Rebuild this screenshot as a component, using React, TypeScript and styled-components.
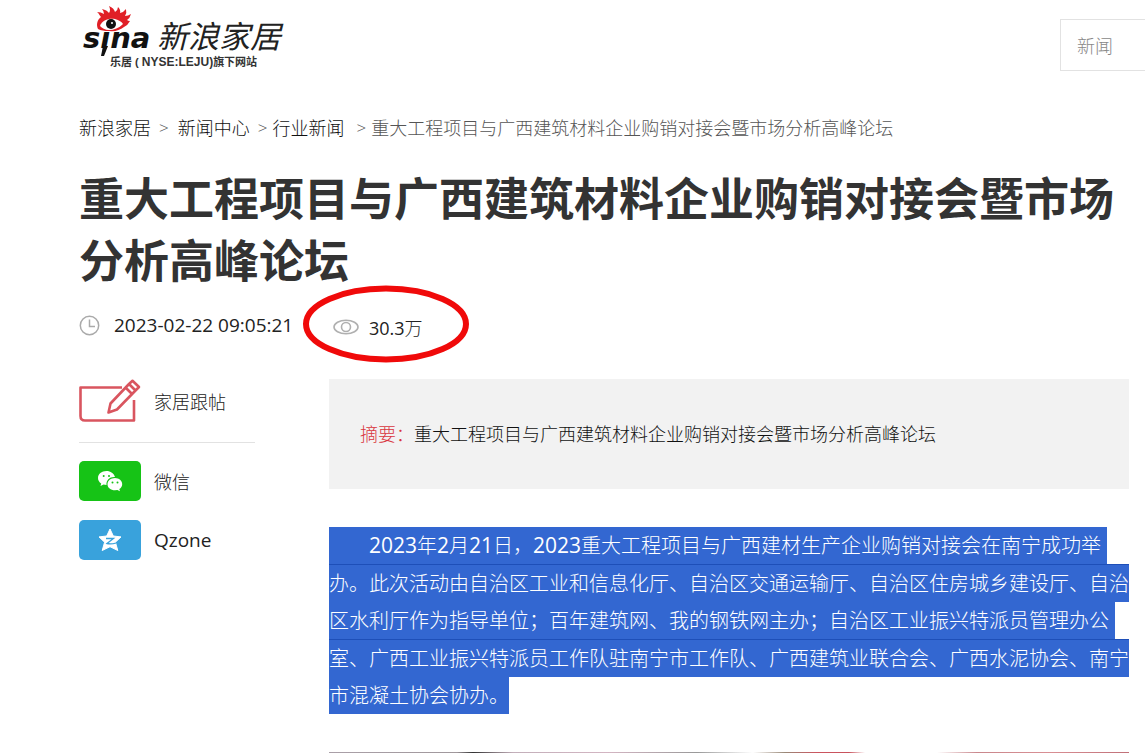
import React from 'react';
import styled, { createGlobalStyle, css } from 'styled-components';

const GlobalStyle = createGlobalStyle`
  * { box-sizing: border-box; }
  body {
    margin: 0;
    background: #fff;
    color: #222;
    font-family: "Open Sans", "Noto Sans CJK SC", sans-serif;
    font-size: 18px;
  }
  a { color: inherit; text-decoration: none; }
`;

const Page = styled.div`
  overflow: hidden;
`;

const Header = styled.header`
  display: flex;
  justify-content: space-between;
  align-items: flex-start;
  height: 110px;
  padding-left: 79px;
`;

const Logo = styled.a`
  display: block;
  padding-top: 4px;
`;

const Search = styled.input`
  width: 85px;
  height: 52px;
  margin-top: 19px;
  padding: 0 16px;
  border: 1px solid #e2e2e2;
  border-right: 0;
  border-radius: 0;
  outline: 0;
  background: #fff;
  font: 300 18px "Noto Sans CJK SC", sans-serif;
  &::placeholder { color: #888; opacity: 1; }
`;

const Content = styled.main`
  padding: 0 16px 0 79px;
`;

const Crumbs = styled.nav`
  display: flex;
  height: 36px;
  line-height: 36px;
  font-weight: 300;
  white-space: nowrap;
  color: #555;
  a { color: #111; }
`;

const Arrow = styled.span<{ $gap: 'after' | 'even' | 'before' }>`
  padding-left: ${(p) => (p.$gap === 'before' ? 12 : 8)}px;
  padding-right: ${(p) => (p.$gap === 'after' ? 9 : 5)}px;
  font-size: 17px;
`;

const Title = styled.h1`
  margin: 22px 0 0;
  font-size: 45px;
  line-height: 62px;
  font-weight: 700;
  color: #333;
`;

const Meta = styled.div`
  display: flex;
  align-items: center;
  height: 66px;
`;

const Time = styled.time`
  width: 189px;
  margin-left: 14px;
  font-size: 19px;
`;

const Views = styled.div`
  position: relative;
  display: flex;
  align-items: center;
  gap: 10px;
  margin-left: 30px;
  padding-top: 4px;
`;

const Ring = styled.svg`
  position: absolute;
  left: -31px;
  top: -25px;
`;

const Light = styled.span`
  font-weight: 300;
`;

const Columns = styled.div`
  display: flex;
  align-items: flex-start;
  gap: 74px;
  padding-top: 21px;
`;

const Share = styled.aside`
  flex: 0 0 176px;
`;

const ShareLink = styled.a<{ $lined?: boolean }>`
  display: flex;
  align-items: center;
  gap: 13px;
  height: 40px;
  margin-bottom: 19px;
  ${(p) => p.$lined && css`
    height: 64px;
    margin-bottom: 18px;
    padding-bottom: 20px;
    border-bottom: 1px solid #e2e2e2;
  `}
`;

const Latin = styled.span`
  font-size: 19px;
`;

const Tile = styled.span<{ $color: string }>`
  display: flex;
  align-items: center;
  justify-content: center;
  width: 62px;
  height: 40px;
  border-radius: 5px;
  background: ${(p) => p.$color};
`;

const Article = styled.article`
  flex: 1;
  min-width: 0;
`;

const Summary = styled.p`
  margin: 0 0 38px;
  padding: 37px 31px;
  line-height: 36px;
  font-weight: 300;
  color: #111;
  background: #f2f2f2;
  b { font-weight: 300; color: #d9363e; }
`;

const Body = styled.p`
  margin: 0;
  font-size: 20px;
  line-height: 37px;
  font-weight: 300;
  color: #fff;
`;

const Line = styled.span<{ $seam?: boolean; $tail?: boolean; $indent?: boolean }>`
  display: block;
  width: fit-content;
  height: ${(p) => (p.$seam ? 38 : 37)}px;
  padding-left: ${(p) => (p.$indent ? 40 : 0)}px;
  padding-right: ${(p) => (p.$tail ? 6 : 0)}px;
  border-top: ${(p) => (p.$seam ? '1px solid #1e4fb8' : '0')};
  background: #3367d1;
  white-space: nowrap;
`;

const Num = styled.span`
  font-size: 21px;
  font-weight: 400;
`;

const Photo = styled.div`
  height: 1px;
  margin-top: 38px;
  background: linear-gradient(90deg, #aaa0a8 0%, #a0989c 16%, #333 18%, #c3afba 23%, #d3b5c2 35%, #999 46%, #fff 53%, #998877 57%, #cc5560 61%, #c8525c 65%, #fff 67%, #fff 76%, #c9878c 81%, #d98f94 90%, #c07078 100%);
`;

export default function App() {
  return (
    <Page>
      <GlobalStyle />
      <Header>
        <Logo href="#" aria-label="新浪家居">
          <svg width="212" height="68" viewBox="79 4 212 68">
            <text x="83" y="48" fontFamily="DejaVu Sans" fontSize="29" fontWeight="700" fontStyle="italic" fill="#111">sina</text>
            <path d="M103 46L108 46L104 56L101 56Z" fill="#111" />
            <path d="M98 29C96 25 97 20 101 17C99 15 99 13 97 12Q101 12 104 14Q104 11 102 9Q107 10 109 13Q111 10 109 6Q114 8 115 12Q118 10 118 7Q121 10 120 13Q124 12 126 9Q127 13 125 16Q128 16 131 14Q130 18 127 20Q128 21 130 21Q128 25 124 27Q118 32 109 31Q102 31 98 29Z" fill="#e01f26" />
            <path d="M100 26C102 20 109 18 115 19C119 20 122 22 123 24C119 28 114 30 109 30C105 30 102 28 100 26Z" fill="#fff" />
            <circle cx="111" cy="24" r="5" fill="#111" />
            <circle cx="112" cy="23" r="1" fill="#fff" />
            <text x="157" y="48" fontFamily="Noto Sans CJK SC" fontSize="31" fontStyle="italic" fill="#222">新浪家居</text>
            <text x="110" y="66" fontFamily="Liberation Sans, Noto Sans CJK SC" fontSize="11" fontWeight="700" fill="#333">乐居 ( <tspan fontSize="12">NYSE:LEJU)</tspan>旗下网站</text>
          </svg>
        </Logo>
        <Search aria-label="新闻" placeholder="新闻" />
      </Header>
      <Content>
        <Crumbs>
          <a href="#">新浪家居</a><Arrow $gap="after">&gt;</Arrow>
          <a href="#">新闻中心</a><Arrow $gap="even">&gt;</Arrow>
          <a href="#">行业新闻</a><Arrow $gap="before">&gt;</Arrow>
          <span>重大工程项目与广西建筑材料企业购销对接会暨市场分析高峰论坛</span>
        </Crumbs>
        <Title>重大工程项目与广西建筑材料企业购销对接会暨市场分析高峰论坛</Title>
        <Meta>
          <svg width="21" height="21" viewBox="0 0 21 21" fill="none" stroke="#aaa" strokeWidth="1.5">
            <circle cx="10.5" cy="10.5" r="9.2" />
            <path d="M10.5 4.500V11.500H16" />
          </svg>
          <Time>2023-02-22 09:05:21</Time>
          <Views>
            <svg width="26" height="16" viewBox="0 0 26 16" fill="none" stroke="#b0b0b0" strokeWidth="1.6">
              <ellipse cx="13" cy="8" rx="12" ry="6.8" />
              <circle cx="13" cy="8" r="4.5" />
            </svg>
            <span>30.3<Light>万</Light></span>
            <Ring width="168" height="78" viewBox="0 0 168 78">
              <ellipse cx="84" cy="39" rx="80" ry="35.5" fill="none" stroke="#f00a0a" strokeWidth="6" />
            </Ring>
          </Views>
        </Meta>
        <Columns>
          <Share>
            <ShareLink href="#" $lined>
              <svg width="62" height="44" viewBox="0 0 62 44" fill="none" stroke="#d9555f" strokeWidth="2.6" strokeLinejoin="round">
                <path d="M43 8.500H1.500V37Q1.500 41.500 6 41.500H55V21" />
                <path d="M29.500 33.500L31.500 24.500L50 5L56.500 11.500L38 30.500ZM50 5L53.500 1.800L60 8L56.500 11.500M46.500 8.500L53 15" />
              </svg>
              <Light>家居跟帖</Light>
            </ShareLink>
            <ShareLink href="#">
              <Tile $color="#16c316">
                <svg width="26" height="22" viewBox="0 0 26 22" fill="#fff">
                  <path d="M9.500 1C4.500 1 1 4 1 8c0 2.300 1.200 4.200 3.200 5.500L3.500 16l3-1.500 3 .5C9 10 13 6.500 18 7 17 3.500 13.500 1 9.500 1Z" />
                  <path d="M18 8c-4.300 0-7.500 2.800-7.500 6.200S13.700 20.300 18 20.300l2.400-.3 2.600 1.300-.7-2.200c1.700-1.200 2.900-2.900 2.900-4.900C25.200 10.800 22 8 18 8Z" />
                  <g fill="#16c316"><circle cx="6.700" cy="6" r="1" /><circle cx="12" cy="6" r="1" /><circle cx="15.500" cy="12.500" r="1" /><circle cx="20.500" cy="12.500" r="1" /></g>
                </svg>
              </Tile>
              <Light>微信</Light>
            </ShareLink>
            <ShareLink href="#">
              <Tile $color="#39a2dc">
                <svg width="24" height="24" viewBox="0 0 24 24">
                  <path d="M12 1l3.300 7 7.700.9-5.600 5.300 2.400 8.300L12 18.700 4.200 22.500l2.400-8.300L1 8.900 8.700 8z" fill="#fff" stroke="#fff" strokeLinejoin="round" />
                  <path d="M8 10.500H15.500L9 15.500Q13 16.500 18 15" fill="none" stroke="#39a2dc" strokeWidth="1.300" />
                </svg>
              </Tile>
              <Latin>Qzone</Latin>
            </ShareLink>
          </Share>
          <Article>
            <Summary><b>摘要：</b>重大工程项目与广西建筑材料企业购销对接会暨市场分析高峰论坛</Summary>
            <Body>
              <Line $indent $tail><Num>2023</Num>年<Num>2</Num>月<Num>21</Num>日，<Num>2023</Num>重大工程项目与广西建材生产企业购销对接会在南宁成功举</Line>
              <Line $seam>办。此次活动由自治区工业和信息化厅、自治区交通运输厅、自治区住房城乡建设厅、自治</Line>
              <Line $tail>区水利厅作为指导单位；百年建筑网、我的钢铁网主办；自治区工业振兴特派员管理办公</Line>
              <Line $seam>室、广西工业振兴特派员工作队驻南宁市工作队、广西建筑业联合会、广西水泥协会、南宁</Line>
              <Line>市混凝土协会协办。</Line>
            </Body>
            <Photo />
          </Article>
        </Columns>
      </Content>
    </Page>
  );
}
